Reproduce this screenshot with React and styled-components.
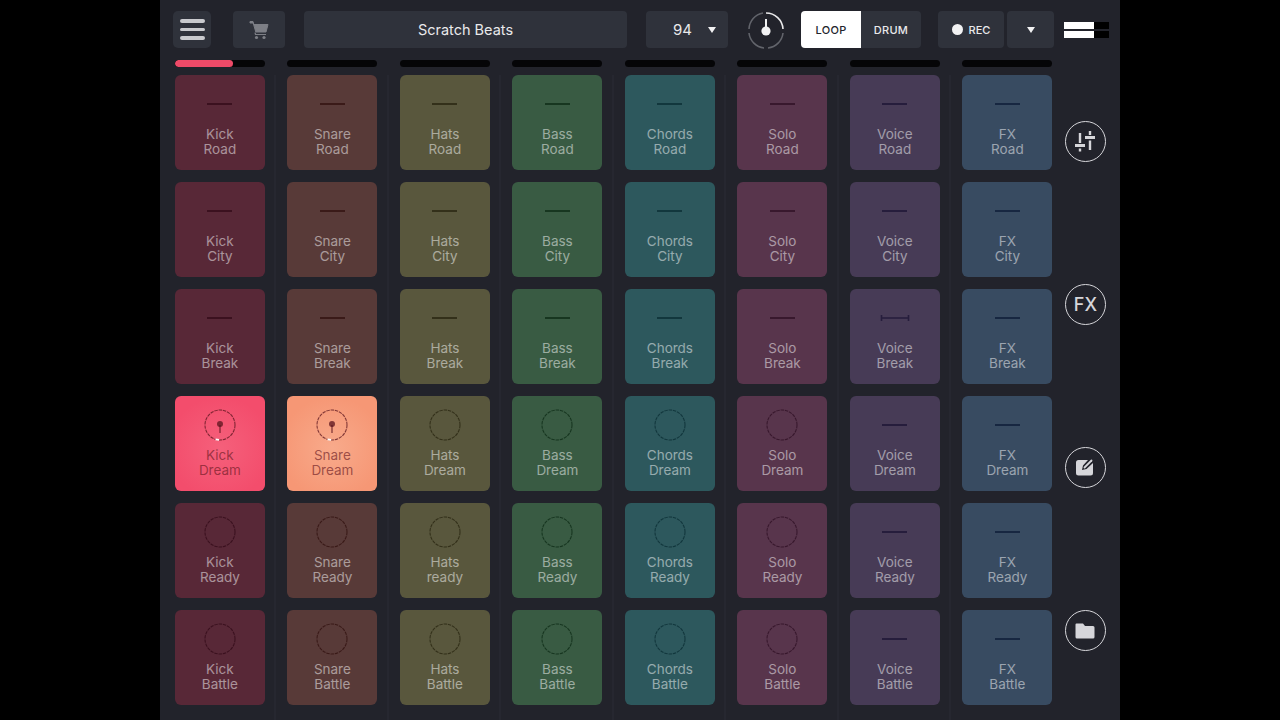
import React from 'react';
import styled, { createGlobalStyle } from 'styled-components';

const GlobalStyle = createGlobalStyle`
  html, body {
    margin: 0;
    height: 100%;
    background: #000;
    font-family: Inter, "Noto Sans", "Liberation Sans", sans-serif;
  }
`;

const tracks = [
  { name: 'Kick', color: '#582837', dark: '#3b111f', active: '#f34d6c', activeMid: '#f5607b' },
  { name: 'Snare', color: '#583a38', dark: '#3a1a18', active: '#f69775', activeMid: '#f8aa8b' },
  { name: 'Hats', color: '#59573d', dark: '#33301a' },
  { name: 'Bass', color: '#395b43', dark: '#173620' },
  { name: 'Chords', color: '#2d585d', dark: '#12373d' },
  { name: 'Solo', color: '#58354c', dark: '#38182d' },
  { name: 'Voice', color: '#473b56', dark: '#261d3c' },
  { name: 'FX', color: '#384b61', dark: '#172741' },
];

const scenes = ['Road', 'City', 'Break', 'Dream', 'Ready', 'Battle'];

const glyphFor = (track, scene) => {
  if (track === 'Voice' && scene === 'Break') return 'bracket';
  if (track === 'Voice' || track === 'FX') return 'dash';
  if (scene === 'Dream' && (track === 'Kick' || track === 'Snare')) return 'playing';
  return ['Dream', 'Ready', 'Battle'].includes(scene) ? 'circle' : 'dash';
};

const labelFor = (track, scene) => (track === 'Hats' && scene === 'Ready' ? 'ready' : scene);

const PadGlyph = ({ kind, color }) => {
  if (kind === 'dash') return <Dash $color={color} />;
  if (kind === 'bracket') {
    return (
      <svg width="30" height="8" viewBox="0 0 30 8">
        <path d="M1 4h28M1.5 1v6M28.5 1v6" stroke={color} strokeWidth="1.6" fill="none" />
      </svg>
    );
  }
  return (
    <svg width="32" height="32" viewBox="0 0 32 32">
      <circle cx="16" cy="16" r="15" fill="none" stroke={color} strokeWidth="1.1" strokeDasharray="3.4 0.9" />
      {kind === 'playing' && (
        <>
          <circle cx="16" cy="15" r="3" fill={color} />
          <path d="M16 16v8" stroke={color} strokeWidth="1.3" />
          <path d="M11.5 30.4l3.6.5" stroke="#fff" strokeWidth="1.6" />
        </>
      )}
    </svg>
  );
};

const App = () => (
  <>
    <GlobalStyle />
    <Screen>
      <Frame>
        <Toolbar>
          <MenuButton aria-label="menu">
            <MenuLine />
            <MenuLine />
            <MenuLine />
          </MenuButton>
          <CartButton aria-label="store">
            <svg width="20" height="20" viewBox="0 0 20 20">
              <path d="M1 1.5h3l.8 3H19l-2 7.5H6.8L4.2 3H1z" fill="#7d7f86" stroke="#7d7f86" strokeWidth="1" strokeLinejoin="round" />
              <path d="M6 12.5l.5 2H17" stroke="#7d7f86" strokeWidth="1.2" fill="none" />
              <circle cx="7.5" cy="17.5" r="1.6" fill="#7d7f86" />
              <circle cx="15" cy="17.5" r="1.6" fill="#7d7f86" />
            </svg>
          </CartButton>
          <TitleBox>Scratch Beats</TitleBox>
          <TempoBox>
            <span>94</span>
            <Caret />
          </TempoBox>
          <Dial>
            <svg width="38" height="38" viewBox="0 0 38 38">
              <path d="M19 2a17 17 0 0 1 17 16" stroke="#e8e8ea" strokeWidth="1.6" fill="none" />
              <path d="M36 22a17 17 0 0 1-15 15M17 37A17 17 0 0 1 2 22M2 18A17 17 0 0 1 16 2" stroke="#62646b" strokeWidth="1.6" fill="none" />
              <circle cx="19" cy="20" r="4.6" fill="#f2f2f3" />
              <path d="M19 20V8" stroke="#f2f2f3" strokeWidth="2" />
            </svg>
          </Dial>
          <ModeSwitch>
            <ModeButton $active>LOOP</ModeButton>
            <ModeButton>DRUM</ModeButton>
          </ModeSwitch>
          <RecButton>
            <RecDot />
            REC
          </RecButton>
          <RecMenu aria-label="record options">
            <Caret />
          </RecMenu>
          <Meter>
            <MeterTrack>
              <MeterFill />
            </MeterTrack>
            <MeterTrack>
              <MeterFill />
            </MeterTrack>
          </Meter>
        </Toolbar>

        <Main>
          <Columns>
            {tracks.map((track, i) => (
              <Column key={track.name}>
                <Progress>{i === 0 && <ProgressFill />}</Progress>
                <PadStack $last={i === tracks.length - 1}>
                  {scenes.map((scene) => {
                    const kind = glyphFor(track.name, scene);
                    const playing = kind === 'playing';
                    return (
                      <Pad
                        key={scene}
                        $color={track.color}
                        $active={playing ? track.active : null}
                        $activeMid={track.activeMid}
                      >
                        <GlyphSlot>
                          <PadGlyph kind={kind} color={playing ? 'rgba(90,20,30,.75)' : track.dark} />
                        </GlyphSlot>
                        <PadLabel $playing={playing}>
                          {track.name}
                          <br />
                          {labelFor(track.name, scene)}
                        </PadLabel>
                      </Pad>
                    );
                  })}
                </PadStack>
              </Column>
            ))}
          </Columns>

          <Rail>
            <RailButton aria-label="mixer">
              <svg width="22" height="24" viewBox="0 0 22 24">
                <path d="M6 3v10M6 18.5v3M16 1v4M16 10.5V20" stroke="#d6d6da" strokeWidth="2.4" fill="none" />
                <path d="M1 14h10v3H1zM11 6h10v3H11z" fill="#d6d6da" />
              </svg>
            </RailButton>
            <RailButton aria-label="effects">FX</RailButton>
            <RailButton aria-label="edit">
              <svg width="20" height="20" viewBox="0 0 20 20">
                <path d="M3.5 2H13L8 7.5l-1 4.5 4.5-1L18 5v10a2.5 2.5 0 0 1-2.5 2.5h-12A2.5 2.5 0 0 1 1 15V4.5A2.5 2.5 0 0 1 3.5 2z" fill="#d6d6da" />
                <path d="M9.5 9.5L16.5 2.5" stroke="#d6d6da" strokeWidth="1.8" strokeLinecap="round" />
              </svg>
            </RailButton>
            <RailButton aria-label="files">
              <svg width="20" height="18" viewBox="0 0 20 18">
                <path d="M1.5 1.5H8L10 4h8a1.5 1.5 0 0 1 1.5 1.5V15a1.5 1.5 0 0 1-1.500 1.500H2A1.500 1.500 0 0 1 .5 15V2.500a1 1 0 0 1 1-1z" fill="#d6d6da" />
              </svg>
            </RailButton>
          </Rail>
        </Main>
      </Frame>
    </Screen>
  </>
);

export default App;

const Screen = styled.div`
  display: flex;
  justify-content: center;
  width: 100%;
  height: 720px;
  overflow: hidden;
  background: #000;
`;

const Frame = styled.div`
  box-sizing: border-box;
  width: 960px;
  height: 720px;
  background: #22232b;
  color: #fff;
`;

const Toolbar = styled.div`
  display: flex;
  align-items: center;
  height: 37px;
  padding: 11px 0 0 13px;
`;

const ToolButton = styled.div`
  display: flex;
  align-items: center;
  justify-content: center;
  box-sizing: border-box;
  height: 37px;
  border-radius: 4px;
  background: #2f323b;
`;

const MenuButton = styled(ToolButton)`
  flex-direction: column;
  gap: 5px;
  width: 38px;
  border-radius: 5px;
`;

const MenuLine = styled.span`
  width: 25px;
  height: 3.5px;
  border-radius: 2px;
  background: #c9cace;
`;

const CartButton = styled(ToolButton)`
  width: 52px;
  margin-left: 22px;
`;

const TitleBox = styled(ToolButton)`
  width: 323px;
  margin-left: 19px;
  font-size: 14.5px;
  color: #e9e9eb;
`;

const TempoBox = styled(ToolButton)`
  gap: 16px;
  width: 82px;
  margin-left: 19px;
  padding-left: 15px;
  font-size: 15px;
  color: #e9e9eb;
`;

const Caret = styled.span`
  width: 0;
  height: 0;
  border-left: 4px solid transparent;
  border-right: 4px solid transparent;
  border-top: 6px solid #f2f2f3;
`;

const Dial = styled.div`
  display: flex;
  width: 38px;
  height: 38px;
  margin-left: 19px;
`;

const ModeSwitch = styled.div`
  display: flex;
  margin-left: 16px;
`;

const ModeButton = styled(ToolButton)`
  width: 60px;
  border-radius: ${({ $active }) => ($active ? '4px 0 0 4px' : '0 4px 4px 0')};
  background: ${({ $active }) => ($active ? '#fff' : '#2f323b')};
  color: ${({ $active }) => ($active ? '#23252c' : '#e9e9eb')};
  font-size: 11px;
  font-weight: 500;
  letter-spacing: 0.3px;
`;

const RecButton = styled(ToolButton)`
  gap: 6px;
  width: 66px;
  margin-left: 17px;
  font-size: 11px;
  font-weight: 500;
  color: #e9e9eb;
`;

const RecDot = styled.span`
  width: 11px;
  height: 11px;
  border-radius: 50%;
  background: #f2f2f3;
`;

const RecMenu = styled(ToolButton)`
  width: 47px;
  margin-left: 3px;
`;

const Meter = styled.div`
  display: flex;
  flex-direction: column;
  gap: 2px;
  margin-left: 10px;
`;

const MeterTrack = styled.div`
  width: 45px;
  height: 7px;
  background: #000;
`;

const MeterFill = styled.div`
  width: 30px;
  height: 100%;
  background: #fff;
`;

const Main = styled.div`
  display: flex;
  padding: 12px 0 0 3.9px;
`;

const Columns = styled.div`
  display: grid;
  grid-template-columns: repeat(8, 112.5px);
`;

const Column = styled.div`
  display: flex;
  flex-direction: column;
`;

const Progress = styled.div`
  width: 90px;
  height: 7px;
  margin-left: 11px;
  border-radius: 4px;
  background: #050507;
  overflow: hidden;
`;

const ProgressFill = styled.div`
  width: 58px;
  height: 100%;
  border-radius: 4px;
  background: #ee4a68;
`;

const PadStack = styled.div`
  display: flex;
  flex-direction: column;
  gap: 12px;
  box-sizing: border-box;
  margin-top: 8px;
  padding: 0 0 15px 11px;
  border-right: 2px solid ${({ $last }) => ($last ? 'transparent' : '#262730')};
`;

const Pad = styled.div`
  box-sizing: border-box;
  width: 90px;
  height: 95px;
  border-radius: 6px;
  background: ${({ $active, $activeMid, $color }) =>
    $active ? `radial-gradient(circle at 50% 55%, ${$activeMid}, ${$active} 75%)` : $color};
`;

const GlyphSlot = styled.div`
  display: flex;
  align-items: center;
  justify-content: center;
  height: 47px;
  padding-top: 5px;
`;

const Dash = styled.span`
  width: 25px;
  height: 2px;
  background: ${({ $color }) => $color};
`;

const PadLabel = styled.div`
  font-size: 13.5px;
  line-height: 14.5px;
  text-align: center;
  color: ${({ $playing }) => ($playing ? 'rgba(105,25,35,.65)' : 'rgba(255,255,255,.5)')};
`;

const Rail = styled.div`
  display: flex;
  flex-direction: column;
  justify-content: space-between;
  width: 44px;
  height: 530px;
  margin-top: 61px;
`;

const RailButton = styled.div`
  display: flex;
  align-items: center;
  justify-content: center;
  box-sizing: border-box;
  width: 41px;
  height: 41px;
  margin-left: 1.1px;
  border: 1.5px solid #d6d6da;
  border-radius: 50%;
  font-size: 18px;
  font-weight: 500;
  color: #d6d6da;
`;
